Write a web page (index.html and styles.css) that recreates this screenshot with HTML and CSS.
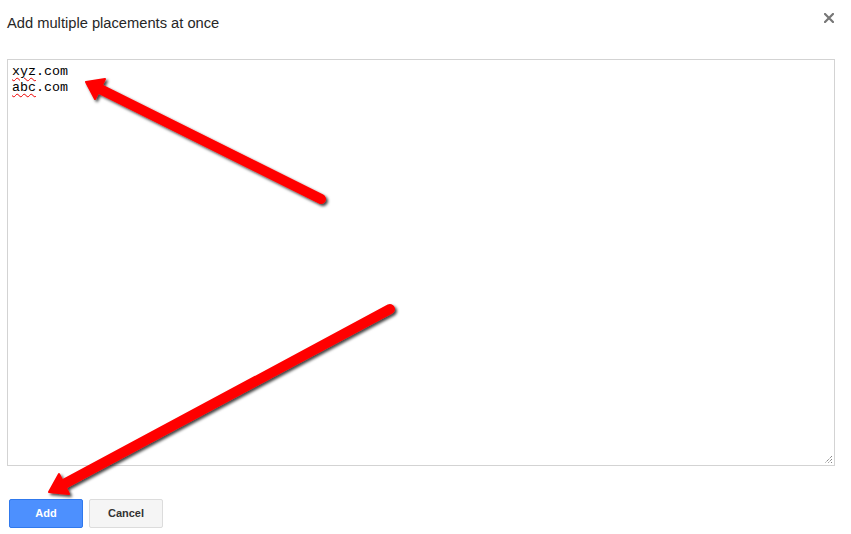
FILE: index.html
```html
<!DOCTYPE html>
<html>
<head>
<meta charset="utf-8">
<link rel="stylesheet" href="styles.css">
</head>
<body>
<div class="dialog">
  <div class="header">
    <h1 class="title">Add multiple placements at once</h1>
    <span class="close" aria-label="Close">
      <svg width="10" height="10" viewBox="0 0 10 10"><path d="M1 1 L9 9 M9 1 L1 9" stroke="#777" stroke-width="2.2" stroke-linecap="square"/></svg>
    </span>
  </div>
  <div class="editor">
    <div class="line"><span class="misspelled">xyz</span>.com</div>
    <div class="line"><span class="misspelled">abc</span>.com</div>
    <svg class="grip" width="9" height="9" viewBox="0 0 9 9"><path d="M8 1 L1 8 M8 4 L4 8 M8 7 L7 8" stroke="#555" stroke-width="1" stroke-dasharray="1 1"/></svg>
  </div>
  <div class="actions">
    <button class="btn btn-primary">Add</button>
    <button class="btn btn-default">Cancel</button>
  </div>
</div>
<svg class="annotations" width="851" height="534" viewBox="0 0 851 534">
  <defs>
    <filter id="sh" x="-10%" y="-10%" width="120%" height="120%">
      <feDropShadow dx="2" dy="2" stdDeviation="1.5" flood-color="#000" flood-opacity="0.75"/>
    </filter>
  </defs>
  <g filter="url(#sh)" fill="#ff0000" stroke="#ff0000">
    <line x1="321" y1="199" x2="100" y2="89" stroke-width="10" stroke-linecap="round"/>
    <polygon points="86,82 105,79 95,99" stroke-width="2" stroke-linejoin="round"/>
    <line x1="390" y1="309" x2="64" y2="484" stroke-width="10" stroke-linecap="round"/>
    <polygon points="49,492 59,474 69,494" stroke-width="2" stroke-linejoin="round"/>
  </g>
</svg>
</body>
</html>
```
FILE: styles.css
```css
html, body {
  margin: 0;
  padding: 0;
  background: #fff;
}
body {
  width: 851px;
  height: 534px;
  overflow: hidden;
  position: relative;
  font-family: Arial, "Liberation Sans", sans-serif;
}
.dialog {
  display: flex;
  flex-direction: column;
  padding: 0 0 0 7px;
}
.header {
  display: flex;
  justify-content: space-between;
  align-items: flex-start;
  height: 59px;
}
.title {
  margin: 14px 0 0 0;
  font-size: 14.7px;
  font-weight: normal;
  color: #262626;
  line-height: 18px;
}
.close {
  margin: 13px 17px 0 0;
  display: flex;
}
.editor {
  position: relative;
  width: 828px;
  height: 407px;
  border: 1px solid #d3d3d3;
  padding: 4px 0 0 4px;
  box-sizing: border-box;
  font-family: "Liberation Mono", "Courier New", monospace;
  font-size: 13.33px;
  line-height: 16px;
  color: #000;
}
.misspelled {
  text-decoration: underline wavy #e00;
  text-decoration-thickness: 1px;
  text-underline-offset: 2px;
}
.grip {
  position: absolute;
  right: 1px;
  bottom: 1px;
}
.actions {
  display: flex;
  gap: 6px;
  margin-top: 33px;
  padding-left: 2px;
}
.btn {
  width: 74px;
  height: 29px;
  border-radius: 2px;
  font-family: Arial, "Liberation Sans", sans-serif;
  font-size: 11px;
  font-weight: bold;
  padding: 0 0 1px 0;
  box-sizing: border-box;
}
.btn-primary {
  background: #4d90fe;
  border: 1px solid #3079ed;
  color: #fff;
}
.btn-default {
  background: #f5f5f5;
  border: 1px solid #dcdcdc;
  color: #333;
}
.annotations {
  position: absolute;
  left: 0;
  top: 0;
  pointer-events: none;
}
```
